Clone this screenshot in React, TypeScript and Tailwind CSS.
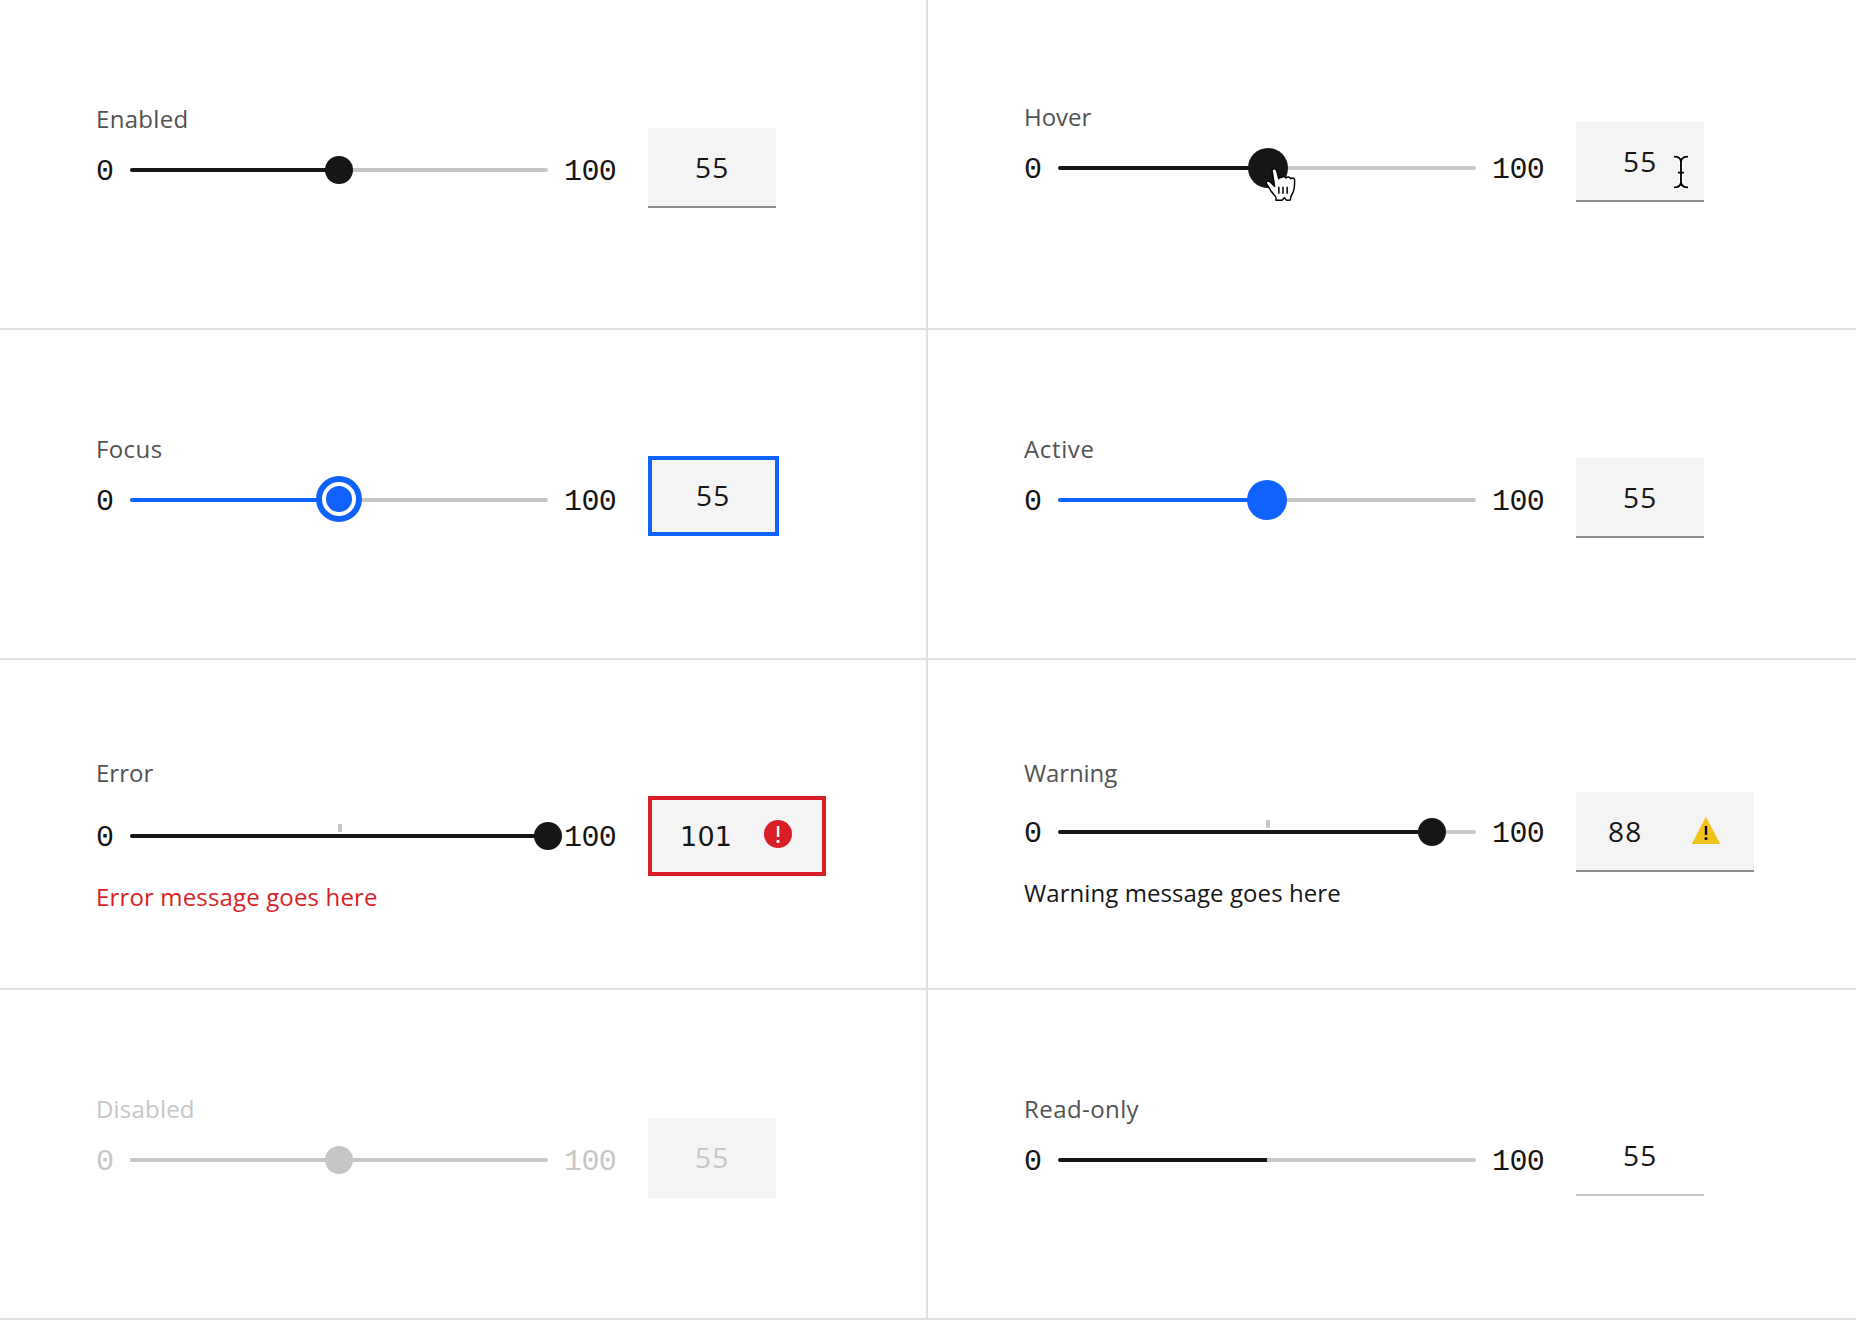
import type { ReactNode } from 'react';

const SANS = "font-['Open_Sans',sans-serif]";

function Handle({ className, value }: { className: string; value: number }) {
  return (
    <span
      className={`absolute top-1/2 -translate-x-1/2 -translate-y-1/2 rounded-full ${className}`}
      style={{ left: `${value}%` }}
    />
  );
}

function PointerCursor() {
  return (
    <svg className="absolute left-[207px] top-[1px] h-[35px] w-[31px]" viewBox="765 230 93 105">
      <path
        d="M793 235C787 235 785 240 787 246L794 288L781 275C776 271 768 272 769 279C774 287 778 294 783 302C788 310 798 316 798 324V330H816L823 322L830 330L841 329C841 320 843 316 848 308C853 300 854 284 854 270C854 264 848 261 842 265C840 259 832 258 828 263C824 258 817 257 814 262C811 261 808 262 806 265L800 241C798 237 796 235 793 235Z"
        fill="#fff"
        stroke="#000"
        strokeWidth="4.4"
        strokeLinejoin="round"
      />
      <path d="M806.500 289V310M819 289V310M831.500 289V310" stroke="#000" strokeWidth="4.4" fill="none" />
    </svg>
  );
}

function TextCursor() {
  const d =
    'M822 170C834 170 842 175 843 185V247C842 257 834 262 822 262M864 170C852 170 844 175 843 185M864 262C852 262 844 257 843 247M834 218H852';
  return (
    <svg className="absolute left-[96px] top-[32px] h-9 w-[18px]" viewBox="816 162 54 108" fill="none">
      <path d={d} stroke="#fff" strokeWidth="13" />
      <path d={d} stroke="#000" strokeWidth="5.600" />
    </svg>
  );
}

function ErrorIcon() {
  return (
    <svg className="size-7" viewBox="0 0 28 28">
      <circle cx="14" cy="14" r="14" fill="#da1e28" />
      <rect x="12.800" y="6" width="2.500" height="11" fill="#fff" />
      <circle cx="14" cy="21.400" r="1.600" fill="#fff" />
    </svg>
  );
}

function WarningIcon() {
  return (
    <svg className="size-7" viewBox="0 0 28 28">
      <path d="M14 0.700L28 27.500Q28 28 27.500 28H0.500Q0 28 0 27.500Z" fill="#f1c21b" />
      <rect x="12.800" y="10" width="2.400" height="9" fill="#000" />
      <circle cx="14" cy="22.500" r="1.600" fill="#000" />
    </svg>
  );
}

type StateProps = {
  label: string;
  labelClass: string;
  top: string;
  gap?: string;
  value: number;
  fill?: string;
  numbers?: string;
  tick?: boolean;
  message?: ReactNode;
  cell?: string;
  children?: ReactNode;
  input: ReactNode;
};

function SliderState({
  label,
  labelClass,
  top,
  gap = 'mt-[11px]',
  value,
  fill = 'bg-[#161616]',
  numbers = 'text-[#161616]',
  tick,
  message,
  cell = '',
  children,
  input,
}: StateProps) {
  const numeral = `pt-1 font-['Liberation_Mono',monospace] text-[30px] leading-[44px] tracking-[-0.6px] ${numbers}`;
  return (
    <section className={`flex h-[330px] items-start border-b-2 border-[#e0e0e0] pl-24 ${cell}`}>
      <div className={`w-[552px] shrink-0 ${top}`}>
        <div className={`h-8 text-2xl leading-8 ${SANS} ${labelClass}`}>{label}</div>
        <div className={`flex h-12 items-center ${gap}`}>
          <span className={`w-[34px] ${numeral}`}>0</span>
          <div className="relative h-1 w-[418px] rounded-sm bg-[#c6c6c6]">
            {tick && <span className="absolute -top-[10px] left-[208px] h-2 w-1 bg-[#c6c6c6]" />}
            <div className={`h-1 rounded-l-sm ${fill}`} style={{ width: `${value}%` }} />
            {children}
          </div>
          <span className={`ml-4 ${numeral}`}>100</span>
        </div>
        {message}
      </div>
      {input}
    </section>
  );
}

function NumberBox({ className, text, children }: { className: string; text: ReactNode; children?: ReactNode }) {
  return (
    <div
      className={`relative flex h-20 items-center text-[28px] leading-9 tracking-[1.2px] text-[#161616] ${SANS} ${className}`}
    >
      <span>{text}</span>
      {children}
    </div>
  );
}

export default function App() {
  return (
    <main className="grid h-[1320px] w-[1856px] grid-cols-2 overflow-hidden bg-white">
      <SliderState
        label="Enabled"
        labelClass="text-[#525252] tracking-[0.3px]"
        top="pt-[103px]"
        value={50}
        cell="border-r-2"
        input={<NumberBox text="55" className="mt-32 w-32 border-b-2 border-[#8d8d8d] bg-[#f4f4f4] pl-[47px]" />}
      >
        <Handle value={50} className="size-7 bg-[#161616]" />
      </SliderState>
      <SliderState
        label="Hover"
        labelClass="text-[#525252] tracking-[-0.05px]"
        top="pt-[101px]"
        value={50}
        input={
          <NumberBox text="55" className="mt-[122px] w-32 border-b-2 border-[#8d8d8d] bg-[#f4f4f4] pl-[47px]">
            <TextCursor />
          </NumberBox>
        }
      >
        <Handle value={50.24} className="size-10 bg-[#161616]" />
        <PointerCursor />
      </SliderState>
      <SliderState
        label="Focus"
        labelClass="text-[#525252] tracking-[0.4px]"
        top="pt-[103px]"
        value={50}
        fill="bg-[#0f62fe]"
        cell="border-r-2"
        input={<NumberBox text="55" className="mt-[126px] w-[131px] border-4 border-[#0f62fe] bg-[#f4f4f4] pb-[2px] pl-11" />}
      >
        <Handle value={50} className="-mt-px size-[46px] border-[6px] border-[#0f62fe] bg-white" />
        <Handle value={50} className="-mt-px size-[26px] bg-[#0f62fe]" />
      </SliderState>
      <SliderState
        label="Active"
        labelClass="text-[#525252] tracking-[0.64px]"
        top="pt-[103px]"
        value={50}
        fill="bg-[#0f62fe]"
        input={<NumberBox text="55" className="mt-32 w-32 border-b-2 border-[#8d8d8d] bg-[#f4f4f4] pl-[47px]" />}
      >
        <Handle value={50} className="size-10 bg-[#0f62fe]" />
      </SliderState>
      <SliderState
        label="Error"
        labelClass="text-[#525252] tracking-normal"
        top="pt-[97px]"
        gap="mt-[23px]"
        value={100}
        tick
        cell="border-r-2"
        message={
          <p className={`mt-[21px] text-2xl leading-8 tracking-[0.15px] text-[#da1e28] ${SANS}`}>
            Error message goes here
          </p>
        }
        input={
          <NumberBox
            text={<span className="font-['DejaVu_Sans',sans-serif] text-[27px] tracking-[0.2px]">101</span>}
            className="mt-[136px] w-[178px] justify-between border-4 border-[#da1e28] bg-[#f4f4f4] pl-7 pr-[30px]"
          >
            <span className="-mt-1">
              <ErrorIcon />
            </span>
          </NumberBox>
        }
      >
        <Handle value={100} className="size-7 bg-[#161616]" />
      </SliderState>
      <SliderState
        label="Warning"
        labelClass="text-[#525252] tracking-[-0.1px]"
        top="pt-[97px]"
        gap="mt-[19px]"
        value={90}
        tick
        message={
          <p className={`mt-[21px] text-2xl leading-8 tracking-[0.08px] text-[#161616] ${SANS}`}>
            Warning message goes here
          </p>
        }
        input={
          <NumberBox
            text="88"
            className="mt-[132px] w-[178px] justify-between border-b-2 border-[#8d8d8d] bg-[#f4f4f4] pl-8 pr-[34px]"
          >
            <span className="-mt-[2px]">
              <WarningIcon />
            </span>
          </NumberBox>
        }
      >
        <Handle value={89.47} className="size-7 bg-[#161616]" />
      </SliderState>
      <SliderState
        label="Disabled"
        labelClass="text-[#c6c6c6] tracking-[0.2px]"
        numbers="text-[#c6c6c6]"
        fill="bg-[#c6c6c6]"
        top="pt-[103px]"
        value={50}
        cell="border-r-2"
        input={
          <NumberBox
            text={<span className="text-[#c6c6c6]">55</span>}
            className="mt-32 w-32 bg-[#f4f4f4] pb-[2px] pl-[47px]"
          />
        }
      >
        <Handle value={50} className="size-7 bg-[#c6c6c6]" />
      </SliderState>
      <SliderState
        label="Read-only"
        labelClass="text-[#525252] tracking-[0.42px]"
        top="pt-[103px]"
        value={50}
        input={<NumberBox text="55" className="mt-[126px] w-32 border-b-2 border-[#c6c6c6] pl-[47px]" />}
      />
    </main>
  );
}
